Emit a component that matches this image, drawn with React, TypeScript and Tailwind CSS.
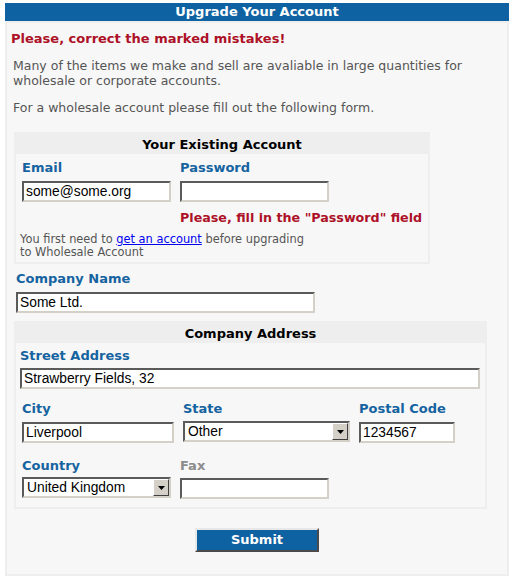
import React from "react";

const verdana = "font-['DejaVu_Sans',Verdana,sans-serif]";
const arial = "font-['Liberation_Sans',Arial,sans-serif]";

const inset =
  "border-2 border-t-[#5a5a5a] border-l-[#5a5a5a] border-b-[#d4d0c8] border-r-[#d4d0c8] bg-white";

function Label({ children, muted }: { children: React.ReactNode; muted?: boolean }) {
  return (
    <div
      className={`text-[13px] leading-[16px] font-bold ${
        muted ? "text-[#8c8c8c]" : "text-[#1563a0]"
      }`}
    >
      {children}
    </div>
  );
}

function TextInput({ value, className }: { value?: string; className: string }) {
  return (
    <div className={`${inset} ${className} h-[21px] flex items-center px-[2px]`}>
      <span className={`${arial} text-[13.8px] text-black leading-none`}>{value}</span>
    </div>
  );
}

function Select({ value, className }: { value: string; className: string }) {
  return (
    <div className={`${inset} ${className} h-[21px] flex items-center`}>
      <span className={`${arial} flex-1 pl-[3px] text-[13.8px] text-black leading-none`}>{value}</span>
      <div className="w-[16px] h-[17px] bg-[#d4d0c8] border border-t-white border-l-white border-b-[#404040] border-r-[#404040] flex items-center justify-center">
        <svg width="7" height="4" viewBox="0 0 7 4">
          <path d="M0 0h7L3.5 4z" fill="#000" />
        </svg>
      </div>
    </div>
  );
}

function Box({ title, className, children }: { title: string; className: string; children: React.ReactNode }) {
  return (
    <div className={`bg-[#eeeeee] ${className}`}>
      <div className="h-[22px] pt-[3px] flex items-center justify-center text-[13px] font-bold text-black">
        {title}
      </div>
      <div className="mx-[2px] mb-[2px] bg-[#f7f7f7]">{children}</div>
    </div>
  );
}

export default function App() {
  return (
    <div className={`${verdana} w-[515px] h-[580px] bg-white pt-[3px]`}>
      <div className="ml-[5px] w-[504px]">
        <div className="h-[18px] bg-[#0f62a1] flex items-center justify-center text-white text-[13px] font-bold">
          Upgrade Your Account
        </div>
        <div className="h-[555px] border-2 border-[#eeeeee] bg-[#f7f7f7] pt-[8px] pb-[22px] flex flex-col">
          <div className="ml-[4px] text-[13px] leading-[16px] font-bold text-[#ad1128]">
            Please, correct the marked mistakes!
          </div>
          <p className="ml-[6px] mt-[11px] text-[12.5px] leading-[15px] text-[#555555]">
            Many of the items we make and sell are avaliable in large quantities for
            <br />
            wholesale or corporate accounts.
          </p>
          <p className="ml-[6px] mt-[12px] text-[12.5px] leading-[15px] text-[#555555]">
            For a wholesale account please fill out the following form.
          </p>

          <Box title="Your Existing Account" className="ml-[7px] mt-[17px] w-[416px]">
            <div className="pt-[6px] pb-[3px] pl-[6px]">
              <div className="flex gap-[9px]">
                <div className="flex flex-col w-[149px]">
                  <Label>Email</Label>
                  <TextInput value="some@some.org" className="mt-[5px] w-[149px]" />
                </div>
                <div className="flex flex-col">
                  <Label>Password</Label>
                  <TextInput className="mt-[5px] w-[149px]" />
                  <div className="mt-[8px] text-[12.7px] leading-[16px] font-bold text-[#ad1128] whitespace-nowrap">
                    Please, fill in the "Password" field
                  </div>
                </div>
              </div>
              <p className="mt-[7px] -ml-[2px] text-[11.4px] leading-[13px] text-[#555555]">
                You first need to{" "}
                <a href="#" className="text-[#0000ee] underline">
                  get an account
                </a>{" "}
                before upgrading
                <br />
                to Wholesale Account
              </p>
            </div>
          </Box>

          <div className="ml-[9px] mt-[7px]">
            <Label>Company Name</Label>
            <TextInput value="Some Ltd." className="mt-[5px] w-[299px]" />
          </div>

          <Box title="Company Address" className="ml-[7px] mt-[8px] w-[473px]">
            <div className="pt-[5px] pb-[8px] pl-[4px]">
              <Label>Street Address</Label>
              <TextInput value="Strawberry Fields, 32" className="mt-[4px] w-[460px]" />
              <div className="flex gap-[9px] mt-[12px] pl-[2px]">
                <div className="flex flex-col">
                  <Label>City</Label>
                  <TextInput value="Liverpool" className="mt-[5px] w-[152px]" />
                </div>
                <div className="flex flex-col">
                  <Label>State</Label>
                  <Select value="Other" className="mt-[4px] w-[167px]" />
                </div>
                <div className="flex flex-col">
                  <Label>Postal Code</Label>
                  <TextInput value="1234567" className="mt-[5px] w-[96px]" />
                </div>
              </div>
              <div className="flex gap-[9px] mt-[15px] pl-[2px]">
                <div className="flex flex-col">
                  <Label>Country</Label>
                  <Select value="United Kingdom" className="mt-[3px] w-[149px]" />
                </div>
                <div className="flex flex-col">
                  <Label muted>Fax</Label>
                  <TextInput className="mt-[4px] w-[149px]" />
                </div>
              </div>
            </div>
          </Box>

          <div className="mt-[19px] flex justify-center">
            <button className="w-[124px] h-[24px] bg-[#0f62a1] border-2 border-t-[#e8e8e8] border-l-[#e8e8e8] border-b-[#4a4a4a] border-r-[#4a4a4a] text-white text-[13px] font-bold">
              Submit
            </button>
          </div>
        </div>
      </div>
    </div>
  );
}
